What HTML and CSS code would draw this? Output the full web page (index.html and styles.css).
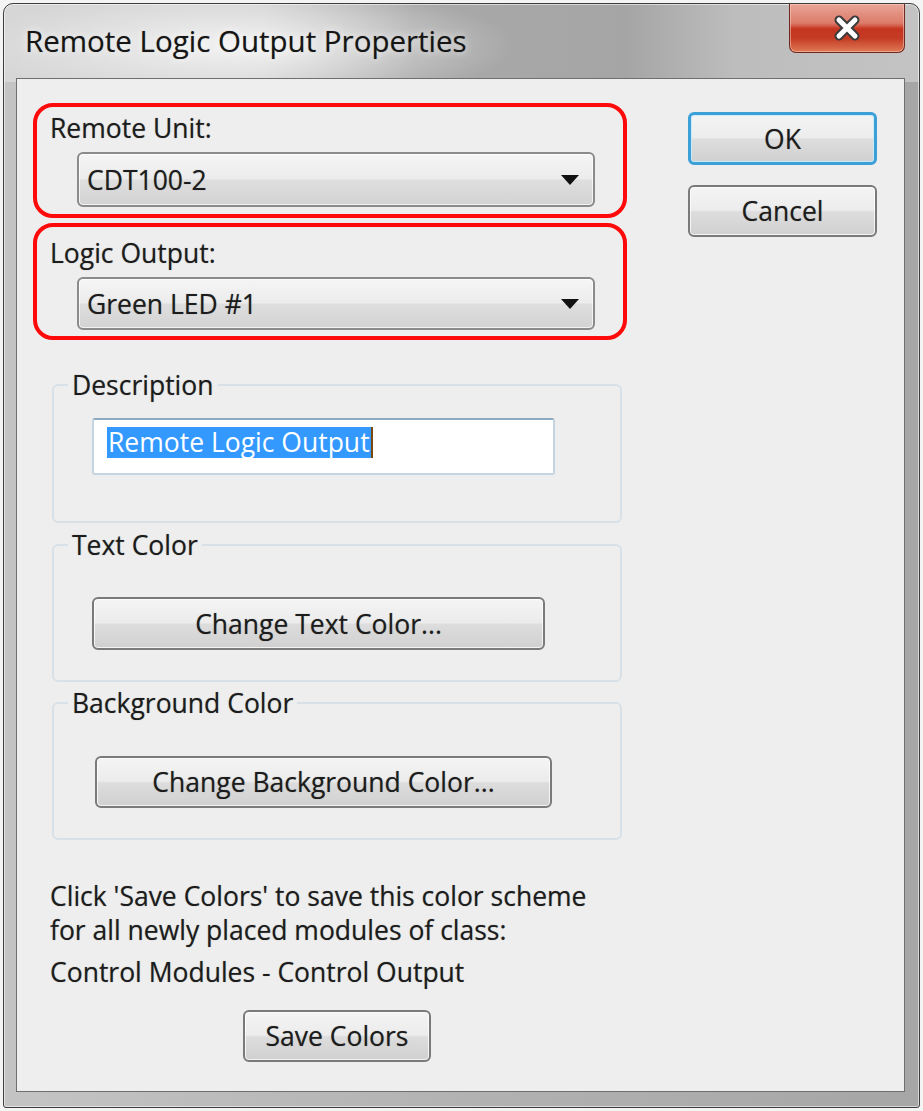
FILE: index.html
```html
<!DOCTYPE html>
<html>
<head>
<meta charset="utf-8">
<title>Remote Logic Output Properties</title>
<link rel="stylesheet" href="styles.css">
</head>
<body>
<div class="window">
  <div class="titlebar">
    <span class="title">Remote Logic Output Properties</span>
    <div class="close">
      <svg width="34" height="28" viewBox="0 0 34 28">
        <path d="M9 6 L25 22 M25 6 L9 22" stroke="#3b3b3b" stroke-width="9" stroke-linecap="round"/>
        <path d="M9 6 L25 22 M25 6 L9 22" stroke="#ffffff" stroke-width="5" stroke-linecap="round"/>
      </svg>
    </div>
  </div>
  <div class="client">
    <div class="main">
      <div class="callout first">
        <div class="lbl">Remote Unit:</div>
        <div class="combo c1"><span>CDT100-2</span>
          <svg class="arrow" width="18" height="10" viewBox="0 0 18 10"><path d="M0 0 H18 L9 10 Z" fill="#111"/></svg>
        </div>
      </div>
      <div class="callout second">
        <div class="lbl">Logic Output:</div>
        <div class="combo c2"><span>Green LED #1</span>
          <svg class="arrow" width="18" height="10" viewBox="0 0 18 10"><path d="M0 0 H18 L9 10 Z" fill="#111"/></svg>
        </div>
      </div>

      <fieldset class="group g-desc">
        <legend>Description</legend>
        <div class="textbox"><span class="sel">Remote Logic Output</span><span class="caret"></span></div>
      </fieldset>

      <fieldset class="group g-text">
        <legend>Text Color</legend>
        <div class="btn b-text">Change Text Color...</div>
      </fieldset>

      <fieldset class="group g-bg">
        <legend>Background Color</legend>
        <div class="btn b-bg">Change Background Color...</div>
      </fieldset>

      <p class="note">Click 'Save Colors' to save this color scheme<br>for all newly placed modules of class:</p>
      <p class="cls">Control Modules - Control Output</p>
      <div class="btn b-save">Save Colors</div>
    </div>
    <div class="side">
      <div class="btn b-ok">OK</div>
      <div class="btn b-cancel">Cancel</div>
    </div>
  </div>
</div>
</body>
</html>
```
FILE: styles.css
```css
* { box-sizing: border-box; }
html, body { margin: 0; padding: 0; }
body {
  width: 923px;
  height: 1111px;
  background: #f4f4f4;
  font-family: "Open Sans", "Noto Sans", sans-serif;
  color: #1c1c1c;
  overflow: hidden;
}
.window {
  margin: 3px 0 0 3px;
  width: 917px;
  height: 1105px;
  border: 1px solid #3d3d3d;
  border-radius: 10px 10px 3px 3px;
  padding: 0 14px 15px 12px;
  background:
    radial-gradient(ellipse 270px 60px at 240px 42px, rgba(255,255,255,0.75), rgba(255,255,255,0) 100%) no-repeat,
    linear-gradient(90deg, #d6d6d6 0%, #cecece 28%, #a9a9a9 45%, #a5a5a5 68%, #bdbdbd 80%, #c3c3c3 100%) 0 0 / 100% 78px no-repeat,
    linear-gradient(90deg, #c4c4c4 0%, #b2b2b2 50%, #a6a6a6 100%);
  box-shadow: inset 0 0 0 1px rgba(255,255,255,0.55);
}
.titlebar {
  height: 74px;
  display: flex;
  align-items: center;
}
.title {
  padding-left: 9px;
  font-size: 29.5px;
  color: #151515;
  text-shadow: 0 0 8px #fff, 0 0 1px rgba(0,0,0,0.45);
  margin-top: -2px;
}
.close {
  margin-left: auto;
  align-self: flex-start;
  width: 116px;
  height: 49px;
  border: 1px solid #6e2a20;
  border-top: none;
  border-radius: 0 0 7px 7px;
  background: linear-gradient(#e9a597 0%, #dc7b69 40%, #c5341f 52%, #c43c25 72%, #e07a55 100%);
  box-shadow: inset 0 0 0 1px rgba(255,210,200,0.5);
  display: flex;
  align-items: center;
  justify-content: center;
}
.client {
  height: 1014px;
  border: 1px solid #6f6f6f;
  background: #eeeeee;
  display: flex;
  padding: 24px 0 0 16px;
}
.main { width: 594px; }
.callout {
  border: 4px solid #ff0a0a;
  border-radius: 20px;
  padding-left: 13px;
}
.first { height: 115px; padding-top: 3px; }
.second { height: 117px; margin-top: 5px; padding-top: 8px; }
.lbl, legend, .note, .cls, .btn, .combo {
  font-size: 26.5px;
  text-shadow: 0 0 1px rgba(0,0,0,0.4);
}
.lbl { line-height: 36px; }
.combo {
  margin: 6px 0 0 27px;
  width: 518px;
  border: 2px solid #8b8b8b;
  border-radius: 6px;
  background: linear-gradient(#f5f5f5 0%, #ececec 48%, #dedede 52%, #d3d3d3 100%);
  box-shadow: inset 0 0 0 1px rgba(255,255,255,0.7);
  display: flex;
  align-items: center;
  padding: 0 14px 0 8px;
}
.c1 { height: 55px; }
.c2 { height: 53px; margin-top: 6px; }
.combo .arrow { margin-left: auto; }

.group {
  margin: 0 0 0 19px;
  width: 570px;
  border: 2px solid #d8e1e7;
  border-radius: 6px;
  padding: 0;
}
.group legend {
  margin-left: 14px;
  padding: 0 4px;
  line-height: 36px;
}
.g-desc { margin-top: 27px; height: 156px; }
.g-text { margin-top: 4px; height: 155px; }
.g-bg { margin-top: 3px; height: 155px; }

.textbox {
  margin: 15px 0 0 38px;
  width: 463px;
  height: 57px;
  background: #fff;
  border: 2px solid #c3d4e2;
  border-top-color: #8eaac0;
  border-radius: 3px;
  padding: 7px 0 0 13px;
  display: flex;
  align-items: flex-start;
}
.sel {
  background: #3399ff;
  color: #fff;
  font-size: 26.5px;
  line-height: 31px;
  padding: 0 1px;
}
.caret { width: 2px; height: 31px; background: #7a4a10; }

.btn {
  border: 2px solid #7a7a7a;
  border-radius: 6px;
  background: linear-gradient(#f4f4f4 0%, #ececec 48%, #dddddd 52%, #d0d0d0 100%);
  box-shadow: inset 0 0 0 1px rgba(255,255,255,0.75);
  display: flex;
  align-items: center;
  justify-content: center;
}
.b-text { margin: 34px 0 0 38px; width: 453px; height: 53px; }
.b-bg { margin: 35px 0 0 41px; width: 457px; height: 52px; }

.note {
  margin: 39px 0 0 17px;
  line-height: 34px;
}
.cls {
  margin: 8px 0 0 17px;
  line-height: 34px;
}
.b-save { margin: 21px 0 0 210px; width: 188px; height: 52px; }

.side {
  margin-left: 61px;
  padding-top: 9px;
  width: 189px;
}
.b-ok {
  height: 53px;
  border: 3px solid #3d9fd8;
  box-shadow: inset 0 0 0 1px rgba(200,235,255,0.9);
}
.b-cancel { height: 52px; margin-top: 20px; }
```
